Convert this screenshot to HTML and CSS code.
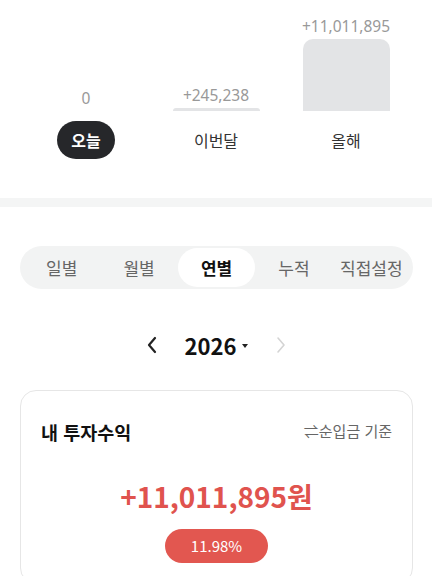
FILE: index.html
```html
<!DOCTYPE html>
<html lang="ko">
<head>
  <meta charset="UTF-8">
  <meta name="viewport" content="width=device-width, initial-scale=1.0">
  <title>투자수익</title>
  <link rel="stylesheet" href="styles.css">
</head>
<body>
  <section class="summary">
    <div class="chart">
      <div class="col">
        <span class="value">0</span>
        <div class="bar" style="height: 0px"></div>
      </div>
      <div class="col">
        <span class="value">+245,238</span>
        <div class="bar" style="height: 3px"></div>
      </div>
      <div class="col">
        <span class="value">+11,011,895</span>
        <div class="bar" style="height: 72px"></div>
      </div>
    </div>
    <div class="labels">
      <div class="col"><span class="label active">오늘</span></div>
      <div class="col"><span class="label">이번달</span></div>
      <div class="col"><span class="label">올해</span></div>
    </div>
  </section>

  <div class="divider"></div>

  <main class="content">
    <nav class="tabs">
      <span class="tab">일별</span>
      <span class="tab">월별</span>
      <span class="tab active">연별</span>
      <span class="tab">누적</span>
      <span class="tab">직접설정</span>
    </nav>

    <div class="year-nav">
      <svg class="chev" width="12" height="18" viewBox="0 0 12 18"><path d="M9 2 L3 9 L9 16" fill="none" stroke="#222" stroke-width="2.2" stroke-linecap="round" stroke-linejoin="round"/></svg>
      <span class="year">2026</span>
      <svg class="caret" width="6" height="4" viewBox="0 0 6 4"><path d="M0 0 H6 L3 4 Z" fill="#222"/></svg>
      <svg class="chev next" width="12" height="18" viewBox="0 0 12 18"><path d="M3 2 L9 9 L3 16" fill="none" stroke="#d4d4d4" stroke-width="1.6" stroke-linecap="round" stroke-linejoin="round"/></svg>
    </div>

    <div class="card">
      <div class="card-head">
        <h3>내 투자수익</h3>
        <span class="basis">⇌순입금 기준</span>
      </div>
      <p class="amount">+11,011,895원</p>
      <span class="rate">11.98%</span>
    </div>
  </main>
</body>
</html>
```

FILE: styles.css
```css
body {
  margin: 0;
  font-family: 'Noto Sans CJK KR', 'Noto Sans', sans-serif;
  background: white;
  color: #222;
}

.summary {
  padding: 0 21px 39px;
}

.chart {
  display: flex;
  align-items: flex-end;
  height: 111px;
}

.col {
  width: 130px;
  display: flex;
  flex-direction: column;
  align-items: center;
}

.value {
  font-family: 'Noto Sans', sans-serif;
  font-size: 15.5px;
  line-height: 20px;
  color: #999;
  margin-bottom: 3px;
}

.bar {
  width: 87px;
  background: #e3e4e6;
  border-radius: 10px 10px 0 0;
}

.labels {
  display: flex;
  margin-top: 10px;
}

.label {
  height: 38px;
  line-height: 38px;
  padding: 0 14px;
  font-size: 16px;
  color: #333;
}

.label.active {
  background: #26272a;
  color: white;
  border-radius: 19px;
  font-weight: 700;
}

.divider {
  height: 9px;
  background: #f4f5f5;
}

.content {
  padding: 39px 19px 0 20px;
}

.tabs {
  display: flex;
  height: 43px;
  padding: 2px 3px;
  box-sizing: border-box;
  background: #f2f3f3;
  border-radius: 22px;
}

.tab {
  flex: 1;
  display: flex;
  align-items: center;
  justify-content: center;
  font-size: 17px;
  color: #666;
}

.tab.active {
  background: white;
  border-radius: 20px;
  font-weight: 700;
  color: #111;
}

.year-nav {
  display: flex;
  align-items: center;
  justify-content: center;
  height: 40px;
  margin-top: 36px;
}

.chev {
  margin-right: 27px;
}

.chev.next {
  margin: 0 0 0 27px;
}

.year {
  font-size: 22px;
  font-weight: 700;
  color: #111;
  margin-right: 6px;
}

.caret {
  margin-top: 2px;
}

.card {
  margin-top: 25px;
  border: 1px solid #e6e6e6;
  border-radius: 16px;
  padding: 27px 20px 20px;
  text-align: center;
}

.card-head {
  display: flex;
  justify-content: space-between;
  align-items: center;
}

.card-head h3 {
  margin: 0;
  font-size: 18.5px;
  line-height: 28px;
  font-weight: 700;
  color: #111;
}

.basis {
  font-size: 15px;
  color: #666;
  margin-top: -4px;
}

.amount {
  margin: 31px 0 0;
  font-size: 28px;
  line-height: 38px;
  font-weight: 700;
  color: #e0534e;
}

.rate {
  display: inline-block;
  margin-top: 14px;
  height: 34px;
  line-height: 34px;
  padding: 0 26px;
  border-radius: 17px;
  background: #e25750;
  color: white;
  font-size: 15px;
}
```
